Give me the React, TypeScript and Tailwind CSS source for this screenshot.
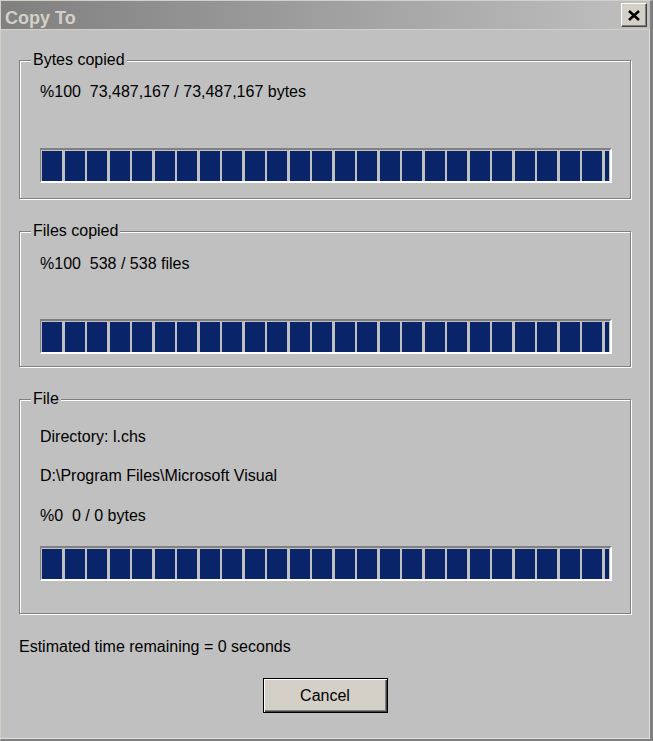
import React from "react";

const BLOCKS = Array.from({ length: 26 });

function Bar() {
  return (
    <div className="w-[572px] h-[35px] border-t-2 border-l border-t-[#808080] border-l-[#808080] border-b-2 border-r-2 border-b-white border-r-white pt-[1px] pl-[1px] pr-[1px] overflow-hidden">
      <div className="flex h-full gap-[2.5px] overflow-hidden">
        {BLOCKS.map((_, i) => (
          <div key={i} className="w-[20px] h-full shrink-0 bg-[#0a246a]" />
        ))}
      </div>
    </div>
  );
}

function Group({
  label,
  className,
  children,
}: {
  label: string;
  className: string;
  children: React.ReactNode;
}) {
  return (
    <div
      className={`relative w-[612px] border border-[#808080] shadow-[inset_1px_1px_0_#ffffff,1px_1px_0_#ffffff] pl-[20px] ${className}`}
    >
      <div className="absolute left-[11px] top-[-9px] bg-[#c0c0c0] px-[2px] leading-[16px]">
        {label}
      </div>
      {children}
    </div>
  );
}

export default function App() {
  return (
    <div className="w-[653px] h-[741px] bg-[#c0c0c0] border-t border-l border-t-[#d4d0c8] border-l-[#d4d0c8] border-r-[3px] border-b-2 border-r-[#808080] border-b-[#808080] shadow-[inset_-1px_-1px_0_#dfdfdf] flex flex-col overflow-hidden font-['Liberation_Sans',Arial,sans-serif] text-[16px] text-black">
      {/* Title bar */}
      <div className="h-[29px] shrink-0 border-b border-b-[#d4d0c8] bg-gradient-to-r from-[#808080] to-[#c0c0c0] flex items-start justify-between">
        <div className="pl-[4px] pt-[8px] text-[18px] leading-[18px] font-bold text-[#d4d0c8]">
          Copy To
        </div>
        <div className="mt-[2px] mr-[3px] w-[26px] h-[24px] bg-[#d4d0c8] border-t border-l border-t-white border-l-white border-b border-r border-b-[#404040] border-r-[#404040] shadow-[inset_-1px_-1px_0_#808080] flex items-center justify-center">
          <svg width="12" height="11" viewBox="0 0 12 11">
            <path d="M1 1 L11 10 M11 1 L1 10" stroke="#000" strokeWidth="2.6" fill="none" />
          </svg>
        </div>
      </div>

      {/* Body */}
      <div className="flex flex-col pl-[18px] pt-[30px]">
        <Group label="Bytes copied" className="pt-[23px] pb-[15px]">
          <div className="leading-[16px] whitespace-pre">%100  73,487,167 / 73,487,167 bytes</div>
          <div className="mt-[48px]">
            <Bar />
          </div>
        </Group>

        <Group label="Files copied" className="mt-[32px] pt-[24px] pb-[12px]">
          <div className="leading-[16px] whitespace-pre">%100  538 / 538 files</div>
          <div className="mt-[47px]">
            <Bar />
          </div>
        </Group>

        <Group label="File" className="mt-[32px] pt-[29px] pb-[32px]">
          <div className="leading-[16px]">Directory: l.chs</div>
          <div className="mt-[23px] leading-[16px]">D:\Program Files\Microsoft Visual</div>
          <div className="mt-[24px] leading-[16px] whitespace-pre">%0  0 / 0 bytes</div>
          <div className="mt-[22px]">
            <Bar />
          </div>
        </Group>

        <div className="mt-[25px] leading-[16px]">Estimated time remaining = 0 seconds</div>

        <div className="mt-[23px] w-[612px] flex justify-center">
          <div className="w-[125px] h-[35px] bg-[#d4d0c8] border border-black shadow-[inset_1px_1px_0_#ffffff,inset_-1px_-1px_0_#404040,inset_-2px_-2px_0_#808080] flex items-center justify-center leading-[16px]">
            Cancel
          </div>
        </div>
      </div>
    </div>
  );
}
